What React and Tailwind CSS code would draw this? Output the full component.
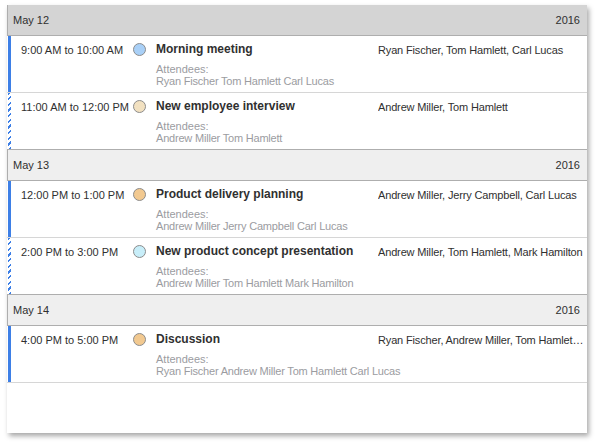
import React from "react";

const groups = [
  {
    date: "May 12",
    year: "2016",
    selected: true,
    items: [
      {
        time: "9:00 AM to 10:00 AM",
        title: "Morning meeting",
        attendees: "Ryan Fischer Tom Hamlett Carl Lucas",
        people: "Ryan Fischer, Tom Hamlett, Carl Lucas",
        dot: "bg-[#a9d0f7]",
        tentative: false,
      },
      {
        time: "11:00 AM to 12:00 PM",
        title: "New employee interview",
        attendees: "Andrew Miller Tom Hamlett",
        people: "Andrew Miller, Tom Hamlett",
        dot: "bg-[#f2e1c1]",
        tentative: true,
      },
    ],
  },
  {
    date: "May 13",
    year: "2016",
    items: [
      {
        time: "12:00 PM to 1:00 PM",
        title: "Product delivery planning",
        attendees: "Andrew Miller Jerry Campbell Carl Lucas",
        people: "Andrew Miller, Jerry Campbell, Carl Lucas",
        dot: "bg-[#f2c990]",
        tentative: false,
      },
      {
        time: "2:00 PM to 3:00 PM",
        title: "New product concept presentation",
        attendees: "Andrew Miller Tom Hamlett Mark Hamilton",
        people: "Andrew Miller, Tom Hamlett, Mark Hamilton",
        dot: "bg-[#c8eef9]",
        tentative: true,
      },
    ],
  },
  {
    date: "May 14",
    year: "2016",
    items: [
      {
        time: "4:00 PM to 5:00 PM",
        title: "Discussion",
        attendees: "Ryan Fischer Andrew Miller Tom Hamlett Carl Lucas",
        people: "Ryan Fischer, Andrew Miller, Tom Hamlett, Carl Lucas",
        dot: "bg-[#f2c990]",
        tentative: false,
      },
    ],
  },
];

const Row = ({ item, last }) => (
  <div
    className={
      "flex pl-[1px] " +
      (last ? "h-[56px]" : "h-[57px] border-b border-[#d6d6d6]")
    }
  >
    {item.tentative ? (
      <div className="w-[3px] shrink-0 bg-[repeating-linear-gradient(135deg,#3d7fe6_0px,#3d7fe6_1.5px,#ffffff_1.5px,#ffffff_4px)]" />
    ) : (
      <div className="w-[3px] shrink-0 bg-[#3d7fe6]" />
    )}
    <div className="w-[122px] shrink-0 pl-[10px] pt-[7px] leading-[14px] text-[11px] text-[#303030]">
      {item.time}
    </div>
    <div className="w-[23px] shrink-0 pt-[7px]">
      <div
        className={
          "w-[13px] h-[13px] rounded-full border border-[#8c8c8c] " + item.dot
        }
      />
    </div>
    <div className="w-[222px] shrink-0 pt-[6px]">
      <div className="text-[12px] leading-[15px] font-bold text-[#303030]">
        {item.title}
      </div>
      <div className="mt-[6px] text-[11px] leading-[12px] text-[#9b9ca1]">
        Attendees:
      </div>
      <div className="text-[11px] leading-[13px] tracking-[-0.2px] text-[#9b9ca1] whitespace-nowrap">
        {item.attendees}
      </div>
    </div>
    <div className="min-w-0 flex-1 pr-[3px] pt-[7px] leading-[14px] text-[11px] tracking-[-0.15px] text-[#303030] truncate">
      {item.people}
    </div>
  </div>
);

const App = () => {
  return (
    <div className="w-[599px] h-[448px] bg-white pl-[7px] pt-[5px] font-['Liberation_Sans',Arial,sans-serif]">
      <div className="w-[580px] h-[428px] bg-white overflow-hidden shadow-[2px_3px_5px_rgba(0,0,0,0.35)]">
        {groups.map((g, gi) => (
          <div key={g.date}>
            <div
              className={
                "flex items-center justify-between h-[31px] pl-[5px] pr-[7px] border-b border-l border-[#aeaeae] text-[11px] text-[#303030] " +
                (g.selected
                  ? "bg-[#d4d4d4]"
                  : "bg-[#efefef] h-[32px] border-t")
              }
            >
              <span>{g.date}</span>
              <span>{g.year}</span>
            </div>
            {g.items.map((item, i) => (
              <Row
                key={item.title}
                item={item}
                last={i === g.items.length - 1 && gi < groups.length - 1}
              />
            ))}
          </div>
        ))}
      </div>
    </div>
  );
};

export default App;
